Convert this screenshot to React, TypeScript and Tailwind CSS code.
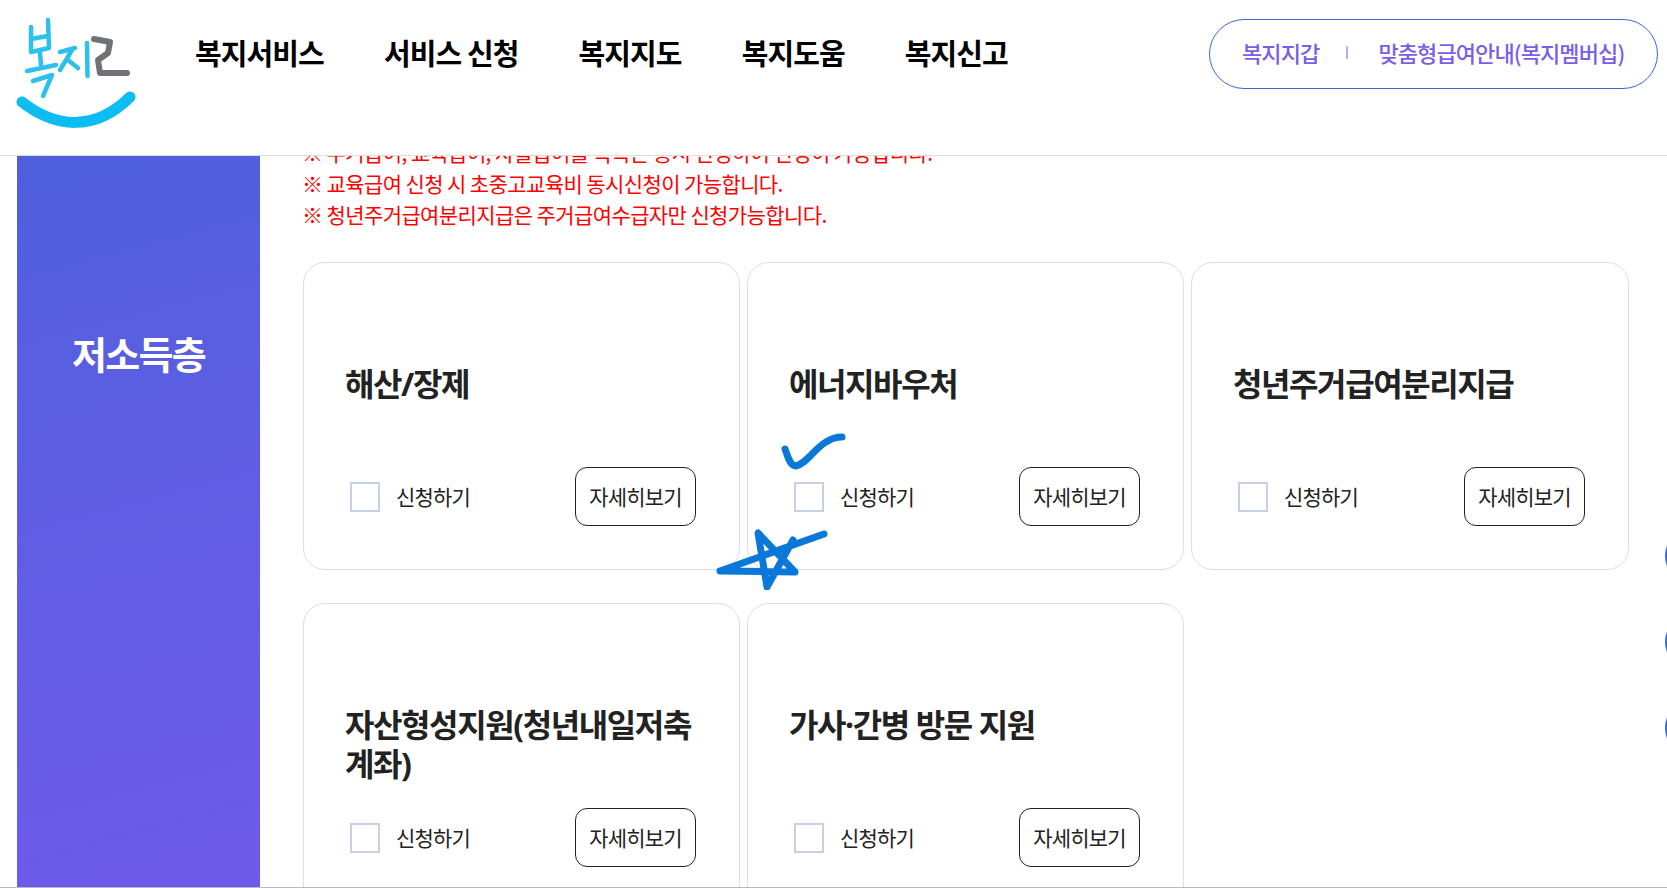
const font = "font-['Noto_Sans_CJK_KR','Noto_Sans',sans-serif]"

const navItems = ['복지서비스', '서비스 신청', '복지지도', '복지도움', '복지신고']

const notices = [
  '※ 주거급여, 교육급여, 자활급여를 목록은 동시 신청하여 신청이 가능합니다.',
  '※ 교육급여 신청 시 초중고교육비 동시신청이 가능합니다.',
  '※ 청년주거급여분리지급은 주거급여수급자만 신청가능합니다.',
]

const services = [
  '해산/장제',
  '에너지바우처',
  '청년주거급여분리지급',
  '자산형성지원(청년내일저축계좌)',
  '가사·간병 방문 지원',
]

function Logo() {
  return (
    <svg viewBox="0 0 135 125" className="w-[135px] h-[125px]" fill="none" strokeLinecap="round" strokeLinejoin="round" role="img" aria-label="복지로">
      <g stroke="#2cc0ee" strokeWidth="4.5">
        <path d="M21 17 L21 42 L39 38 L38 10 M21 29 L38 26" />
        <path d="M17 61 L46 55 M30 43 L31 55 M23 71 L42 65 L33 86" />
        <path d="M50 42 L65 38 M62 40 L50 60 M58 50 L68 58 M77 33 L77.5 66" />
      </g>
      <path d="M84 29 L100 32 L98 43 L88 50 L90 63 L117 63" stroke="#6f7277" strokeWidth="6" />
      <path d="M12 92 C45 118 85 122 120 87" stroke="#0dbdf2" strokeWidth="11" />
    </svg>
  )
}

function ServiceCard({ title }: { title: string }) {
  return (
    <div className="h-[308px] rounded-[22px] border border-[#dddddd] bg-white flex flex-col pl-[41px] pr-[43px]">
      <h3 className="h-[204px] pt-[101px] font-['Noto_Sans','Noto_Sans_CJK_KR',sans-serif] text-[32px] leading-[39px] font-bold tracking-[-1.4px] text-[#222222] break-all">
        {title}
      </h3>
      <div className="flex items-center justify-between">
        <label className="flex items-center gap-[16px] pl-[5px] text-[21px] tracking-[-0.8px] text-[#222222]">
          <span className="w-[30px] h-[30px] border-2 border-[#c8d0e6] bg-white" />
          신청하기
        </label>
        <button className="w-[121px] h-[59px] rounded-[12px] border border-[#222222] text-[21px] tracking-[-0.8px] text-[#222222]">
          자세히보기
        </button>
      </div>
    </div>
  )
}

export default function App() {
  return (
    <div className={`${font} relative h-[888px] overflow-hidden bg-white border-b border-[#bbbbbb] flex flex-col`}>
      <header className="relative z-10 h-[156px] shrink-0 bg-white border-b border-[#dddddd] flex items-start">
        <div className="w-[195px] shrink-0 pl-[10px] pt-[10px]">
          <Logo />
        </div>
        <nav className="flex gap-[60px] pt-[30px] text-[29px] leading-[44px] font-bold tracking-[-0.9px] text-black">
          {navItems.map((item) => (
            <a key={item}>{item}</a>
          ))}
        </nav>
        <div className="ml-auto mr-[9px] mt-[19px] w-[449px] h-[70px] rounded-[35px] border border-[#3f63d8] flex items-center pl-[32px] pb-[3px] text-[22px] font-medium tracking-[-0.9px] text-[#7a5de8]">
          <span>복지지갑</span>
          <span className="w-[2px] h-[13px] bg-[#b9aef0] ml-[27px] mr-[30px]" />
          <span>맞춤형급여안내(복지멤버십)</span>
        </div>
      </header>

      <main className="flex-1 min-h-0 overflow-hidden flex pl-[17px]">
        <aside className="w-[243px] shrink-0 bg-linear-165 from-[#4f60dd] to-[#6f5aea] flex justify-center pt-[172px]">
          <h2 className="text-[38px] leading-[50px] font-bold tracking-[-1.7px] text-white">저소득층</h2>
        </aside>
        <section className="ml-[43px] w-[1326px] -mt-[19px]">
          <ul className="-ml-px text-[21px] leading-[31px] tracking-[-0.6px] text-[#ff0000]">
            {notices.map((n) => (
              <li key={n}>{n}</li>
            ))}
          </ul>
          <div className="mt-[32px] grid grid-cols-[437px_437px_1fr] gap-x-[7px] gap-y-[33px]">
            {services.map((s) => (
              <ServiceCard key={s} title={s} />
            ))}
          </div>
        </section>
      </main>

      {/* quick menu buttons cut off by the right edge */}
      <div className="absolute right-[-58px] top-[526px] flex flex-col gap-[26px]">
        <span className="w-[60px] h-[60px] rounded-full bg-[#3f63d8]" />
        <span className="w-[60px] h-[60px] rounded-full bg-[#3f63d8]" />
        <span className="w-[60px] h-[60px] rounded-full bg-[#3f63d8]" />
      </div>

      {/* pen marks drawn over the screenshot */}
      <svg className="absolute left-[770px] top-[425px] w-[80px] h-[70px] z-20" viewBox="0 0 80 70" fill="none" stroke="#0a78d8" strokeWidth="7" strokeLinecap="round" strokeLinejoin="round">
        <path d="M15 24 C18 32 20 41 26 41 C36 39 44 24 56 17 C62 13 67 12 72 12" />
      </svg>
      <svg className="absolute left-[710px] top-[520px] w-[130px] h-[70px] z-20" viewBox="0 0 130 70" fill="none" stroke="#0a78d8" strokeWidth="7" strokeLinecap="round" strokeLinejoin="round">
        <path d="M10 51 L85 52 L48 13 L57 67 L83 20 M10 51 L114 14" />
      </svg>
    </div>
  )
}
